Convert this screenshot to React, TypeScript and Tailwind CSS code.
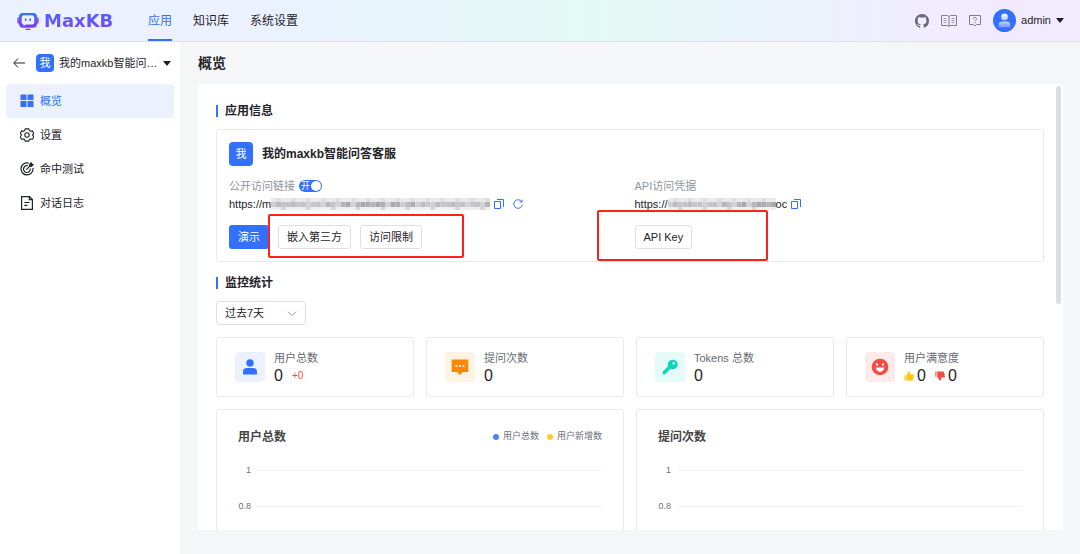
import React from "react";

function LogoMark() {
  return (
    <svg viewBox="0 0 24 20" className="h-[18px] w-[22px]" aria-hidden="true">
      <defs>
        <linearGradient id="logo" x1="0" y1="0" x2="0" y2="1">
          <stop offset="0" stopColor="#3370ff" />
          <stop offset="1" stopColor="#7f3bf5" />
        </linearGradient>
      </defs>
      <rect x="0" y="6" width="4" height="7" rx="1.5" fill="#8a5cf6" />
      <rect x="20" y="6" width="4" height="7" rx="1.5" fill="#8a5cf6" />
      <rect x="2" y="1" width="20" height="16.500" rx="4.5" fill="url(#logo)" />
      <path d="M7.500 3.700h9A2.500 2.500 0 0 1 19 6.200v5.300A2.500 2.500 0 0 1 16.500 14H10l-3 1.500V14A2.500 2.500 0 0 1 5 11.500V6.200A2.500 2.500 0 0 1 7.500 3.700z" fill="#ecf0fe" />
      <rect x="8.500" y="7" width="1.800" height="3" rx=".9" fill="#4a5cfb" />
      <rect x="13.500" y="7" width="1.800" height="3" rx=".9" fill="#4a5cfb" />
      <rect x="9" y="18.500" width="6" height="1.500" rx=".7" fill="#8b3cf5" />
    </svg>
  );
}

function GithubIcon() {
  return (
    <svg viewBox="0 0 16 16" className="size-[14px]" fill="#646a73" aria-hidden="true">
      <path d="M8 0C3.580 0 0 3.580 0 8c0 3.540 2.290 6.530 5.470 7.590.4.070.55-.17.55-.38 0-.19-.01-.82-.01-1.490-2.010.37-2.530-.49-2.690-.94-.09-.23-.48-.94-.82-1.130-.28-.15-.68-.52-.01-.53.63-.01 1.080.58 1.230.82.72 1.210 1.870.87 2.330.66.07-.52.28-.87.51-1.070-1.780-.2-3.640-.89-3.640-3.950 0-.87.31-1.590.82-2.150-.08-.2-.36-1.020.08-2.120 0 0 .67-.21 2.200.82.64-.18 1.320-.27 2-.27s1.360.09 2 .27c1.530-1.040 2.200-.82 2.200-.82.44 1.100.16 1.920.08 2.120.51.56.82 1.270.82 2.150 0 3.070-1.870 3.750-3.650 3.950.29.25.54.73.54 1.480 0 1.070-.01 1.930-.01 2.200 0 .21.15.46.55.38A8.010 8.010 0 0 0 16 8c0-4.420-3.580-8-8-8z" />
    </svg>
  );
}

function BookIcon() {
  return (
    <svg viewBox="0 0 16 12" className="h-3 w-4" fill="none" stroke="#7b8089" aria-hidden="true">
      <path d="M8 1.500v9.500M.5.500h6L8 1.500 9.500.500h6v10h-6L8 11.500 6.500 10.500h-6z" />
      <path d="M2.500 3.500h3M2.500 5.500h3M2.500 7.500h3M10.500 3.500h3M10.500 5.500h3M10.500 7.500h3" opacity=".7" />
    </svg>
  );
}

function HelpIcon() {
  return (
    <svg viewBox="0 0 12 12" className="size-3" fill="none" stroke="#7b8089" aria-hidden="true">
      <path d="M.5.500h11v9H7.500L6 11 4.500 9.500h-4z" />
      <path d="M4.500 4a1.500 1.500 0 1 1 2.300 1.200c-.6.300-.8.600-.8 1.100M6 7.300v1" />
    </svg>
  );
}

function Avatar() {
  return (
    <svg viewBox="0 0 24 24" className="size-[23px]" aria-hidden="true">
      <defs>
        <linearGradient id="person" x1="0" y1="0" x2="0" y2="1">
          <stop offset="0" stopColor="#fff" />
          <stop offset="1" stopColor="#fff" stopOpacity=".6" />
        </linearGradient>
        <linearGradient id="body" x1="0" y1="0" x2="0" y2="1">
          <stop offset="0" stopColor="#fff" stopOpacity=".7" />
          <stop offset="1" stopColor="#fff" stopOpacity=".3" />
        </linearGradient>
      </defs>
      <circle cx="12" cy="12" r="12" fill="#3370ff" />
      <circle cx="12" cy="8.300" r="3.500" fill="url(#person)" />
      <path d="M6 19v-2.500a3.500 3.500 0 0 1 3.500-3.500h5a3.500 3.500 0 0 1 3.500 3.500V19z" fill="url(#body)" />
    </svg>
  );
}

function Caret() {
  return (
    <svg viewBox="0 0 8 5" className="h-[5px] w-2 shrink-0" fill="#1f2329" aria-hidden="true">
      <path d="M.8 0h6.400a.4.400 0 0 1 .3.700L4.400 4.600a.5.500 0 0 1-.8 0L.5.700A.4.400 0 0 1 .8 0z" />
    </svg>
  );
}

function GridIcon() {
  return (
    <svg viewBox="0 0 14 14" className="size-[14px]" fill="#3370ff" aria-hidden="true">
      <rect x=".5" y=".5" width="6" height="5.500" rx=".5" />
      <rect x="7.500" y=".5" width="6" height="5.500" rx=".5" />
      <rect x=".5" y="7" width="6" height="6" rx=".5" />
      <rect x="7.500" y="7" width="6" height="6" rx=".5" />
    </svg>
  );
}

function GearIcon() {
  return (
    <svg viewBox="0 0 14 14" className="size-[14px]" fill="none" stroke="#1f2329" strokeWidth="1.100" strokeLinejoin="round" aria-hidden="true">
      <path d="M5.200.900h3.600l.6 1.700 1.100.6 1.800-.3 1.300 2.200v1L12.400 7l1.200 1.400v.9l-1.300 2-1.800-.3-1.100.6-.6 1.500H5.200l-.6-1.500-1.100-.6-1.800.3-1.300-2v-.9L1.600 7 .4 5.600v-.7l1.300-2 1.800.3 1.100-.6z" />
      <circle cx="7" cy="7" r="2.200" />
    </svg>
  );
}

function TargetIcon() {
  return (
    <svg viewBox="0 0 14 14" className="size-[14px]" fill="none" stroke="#1f2329" strokeWidth="1.200" strokeLinecap="round" strokeLinejoin="round" aria-hidden="true">
      <path d="M8.300 1.100A6 6 0 1 0 13 6.300" />
      <path d="M7.300 3.700A3.400 3.400 0 1 0 10.300 6.900" />
      <path d="M6.600 7.400 9.800 4.200" />
      <path d="M9.800 4.200V2.300L11.400.8l.3 1.500 1.500.3-1.500 1.600z" fill="#1f2329" />
    </svg>
  );
}

function DocIcon() {
  return (
    <svg viewBox="0 0 14 14" className="size-[14px]" fill="none" stroke="#1f2329" strokeWidth="1.200" aria-hidden="true">
      <path d="M1.600.700h8l2.800 2.800v9.800H1.600zM9.300.700v3h3M4.300 6.500h5.200M4.300 9.300h3.200" />
    </svg>
  );
}

function CopyIcon() {
  return (
    <svg viewBox="0 0 10 10" className="size-[10px]" fill="none" stroke="#3370ff" aria-hidden="true">
      <path d="M.5 2.500h6v7h-6zM3 .500h6.500V8" />
    </svg>
  );
}

function RefreshIcon() {
  return (
    <svg viewBox="0 0 10 10" className="size-[10px]" fill="none" stroke="#3370ff" aria-hidden="true">
      <path d="M8.700 2.800A4.300 4.300 0 1 0 9.300 5.500M9 .500v2.500H6.500" />
    </svg>
  );
}

function UserIcon() {
  return (
    <svg viewBox="0 0 16 16" className="size-4" fill="#3370ff" aria-hidden="true">
      <circle cx="8" cy="4" r="3.700" />
      <path d="M1 15v-2a4 4 0 0 1 4-4h6a4 4 0 0 1 4 4v2a.6.600 0 0 1-.6.600H1.600A.6.600 0 0 1 1 15z" />
    </svg>
  );
}

function ChatIcon() {
  return (
    <svg viewBox="0 0 18 18" className="size-[18px]" aria-hidden="true">
      <path d="M1.300 1.500h15.400a.6.600 0 0 1 .6.600v11.300a.6.600 0 0 1-.6.600H12l-3 3-3-3H1.300a.6.600 0 0 1-.6-.6V2.100a.6.600 0 0 1 .6-.6z" fill="#ff8800" />
      <path d="M4.500 7h2v1.800h-2zM8 7h2v1.800H8zM11.500 7h2v1.800h-2z" fill="#fff" />
    </svg>
  );
}

function KeyIcon() {
  return (
    <svg viewBox="0 0 16 16" className="size-4" aria-hidden="true">
      <path d="M10.600.800a4.700 4.700 0 1 1-1.500 9l-1.500.8L3 15.200H.800v-2.600l5.400-5.400A4.700 4.700 0 0 1 10.600.800z" fill="#04d8bd" />
      <circle cx="11.800" cy="4.300" r="1.300" fill="#fff" />
    </svg>
  );
}

function SmileIcon() {
  return (
    <svg viewBox="0 0 18 18" className="size-[18px]" aria-hidden="true">
      <circle cx="9" cy="9" r="8.300" fill="#f54a45" />
      <path d="M5 5.500h2v2H5zM11 5.500h2v2h-2zM4.800 9.500h8.400a4.200 4.200 0 0 1-8.400 0z" fill="#fff" />
    </svg>
  );
}

function ThumbIcon({ down }: { down?: boolean }) {
  return (
    <svg viewBox="0 0 10 10" className="size-[10px]" fill={down ? "#f54a45" : "#ffc60a"} aria-hidden="true">
      <g transform={down ? "matrix(1 0 0 -1 0 10)" : undefined}>
        <path d="M0 4.200h1.700V9.500H0z" opacity=".65" />
        <path d="M2.300 4.200 4.700.6c.9-.3 1.700.4 1.500 1.300L5.800 3.600h3.400c.6 0 .9.500.8 1L9 8.800c-.1.400-.5.700-.9.700H2.300z" />
      </g>
    </svg>
  );
}

const shades = ["#cfcfd1", "#b6b6b9", "#c7c7ca", "#aeaeb2", "#d3d3d5", "#bcbcc0", "#a9a9ad", "#c3c3c6"];

function Mosaic({ count }: { count: number }) {
  return (
    <svg viewBox={`0 0 ${count * 5} 12`} className="h-3 w-full" preserveAspectRatio="none" aria-hidden="true">
      {Array.from({ length: count }, (_, i) => (
        <g key={i}>
          <rect x={i * 5} y="0" width="5" height="4" fill={i % 3 === 1 ? "#dedee0" : "#e9e9eb"} />
          <rect x={i * 5} y="4" width="5" height="5" fill={shades[(i * 5 + (i >> 2)) % 8]} />
          <rect x={i * 5} y="9" width="5" height="3" fill={i % 5 === 2 ? "#d6d6d9" : "#efeff0"} />
        </g>
      ))}
    </svg>
  );
}

function SectionTitle({ children }: { children: React.ReactNode }) {
  return (
    <h2 className="flex h-5 items-center gap-[7px] text-[12px] font-bold">
      <span className="h-3 w-[2px] bg-[#3370ff]" />
      {children}
    </h2>
  );
}

const outlineButton = "h-6 rounded-[3px] border border-[#dee0e3] bg-white px-2 text-[11px] leading-4";

const menu = [
  { label: "概览", icon: <GridIcon />, active: true },
  { label: "设置", icon: <GearIcon /> },
  { label: "命中测试", icon: <TargetIcon /> },
  { label: "对话日志", icon: <DocIcon /> },
];

function Stat({ label, tint, icon, children }: { label: string; tint: string; icon: React.ReactNode; children: React.ReactNode }) {
  return (
    <div className="flex h-[60px] min-w-0 items-center gap-[9px] rounded-[3px] border border-[#e8e9eb] px-[18px]">
      <div className={`flex size-[30px] shrink-0 items-center justify-center rounded ${tint}`}>{icon}</div>
      <div>
        <p className="text-[11px] leading-[18px] text-[#646a73]">{label}</p>
        <div className="flex items-center text-[16px] leading-[18px]">{children}</div>
      </div>
    </div>
  );
}

function Chart({ title, legend }: { title: string; legend?: { name: string; dot: string }[] }) {
  return (
    <section className="h-[220px] min-w-0 rounded-[3px] border border-[#e8e9eb] px-[21px] pt-[17px]">
      <div className="flex h-5 items-center justify-between">
        <h3 className="text-[12px] font-bold text-[#464646]">{title}</h3>
        <ul className="flex gap-2 text-[9px] text-[#6b6f78]">
          {legend?.map((l) => (
            <li key={l.name} className="flex items-center gap-1">
              <span className={`size-[6px] rounded-full ${l.dot}`} />
              {l.name}
            </li>
          ))}
        </ul>
      </div>
      <div className="mt-[15px] text-[9px] leading-4 text-[#6e7079]">
        {["1", "0.8"].map((v) => (
          <div key={v} className="mb-5 flex h-4 items-center gap-[6px]">
            <span className="w-[13px] text-right">{v}</span>
            <span className="h-px flex-1 bg-[#f1f2f4]" />
          </div>
        ))}
      </div>
    </section>
  );
}

export default function App() {
  return (
    <div className="flex h-screen flex-col bg-[#f5f6f7] font-['Liberation_Sans','Noto_Sans_CJK_SC',sans-serif] text-[11px] text-[#1f2329]">
      <header className="flex h-[42px] shrink-0 items-center border-b border-[#dcdfe9] bg-[linear-gradient(90deg,#ebf1ff_24%,#e2faf5_55%,#f2ebfe_88%)] pr-4 pl-[17px]">
        <a href="#home" className="flex w-[131px] items-center gap-[5px]">
          <LogoMark />
          <span className="bg-linear-to-b from-[#3f66fd] to-[#7b41f6] bg-clip-text font-['DejaVu_Sans',sans-serif] text-[18px] leading-6 font-bold text-transparent">MaxKB</span>
        </a>
        <nav className="flex h-full gap-[21px] text-[12px]">
          <a href="#apps" className="flex items-center border-b-2 border-[#3370ff] pt-[2px] text-[#3370ff]">应用</a>
          <a href="#datasets" className="flex items-center">知识库</a>
          <a href="#system" className="flex items-center">系统设置</a>
        </nav>
        <div className="ml-auto flex items-center gap-3">
          <a href="#github" aria-label="GitHub"><GithubIcon /></a>
          <a href="#docs" aria-label="文档"><BookIcon /></a>
          <a href="#help" aria-label="帮助"><HelpIcon /></a>
          <button className="flex items-center gap-[5px]">
            <Avatar />
            admin
            <Caret />
          </button>
        </div>
      </header>

      <div className="flex min-h-0 flex-1">
        <aside className="w-[180px] shrink-0 bg-white px-[6px]">
          <div className="flex h-[42px] items-center pr-[3px] pl-[7px]">
            <button aria-label="返回">
              <svg viewBox="0 0 12 10" className="h-[10px] w-3" fill="none" stroke="#1f2329" aria-hidden="true">
                <path d="M5 .500.800 5 5 9.500M.8 5H12" />
              </svg>
            </button>
            <span className="ml-[11px] flex size-[18px] shrink-0 items-center justify-center rounded bg-[#3370ff] text-white">我</span>
            <button className="ml-[5px] flex flex-1 items-center justify-between gap-1 whitespace-nowrap">
              <span>我的maxkb智能问…</span>
              <Caret />
            </button>
          </div>
          <nav>
            {menu.map((m) => (
              <a key={m.label} href={`#${m.label}`} className={`flex h-[34px] items-center gap-[6px] rounded pl-[14px] ${m.active ? "bg-[#ebf1ff] text-[#3370ff]" : ""}`}>
                {m.icon}
                {m.label}
              </a>
            ))}
          </nav>
        </aside>

        <main className="flex min-w-0 flex-1 flex-col pr-[17px] pb-6 pl-[18px]">
          <h1 className="flex h-[42px] shrink-0 items-center text-[14px] font-bold">概览</h1>
          <div className="relative min-h-0 flex-1 overflow-hidden rounded-[3px] bg-white pt-[17px] pr-[19px] pl-[18px]">
            <SectionTitle>应用信息</SectionTitle>
            <section className="mt-2 h-[133px] rounded-[3px] border border-[#e8e9eb] px-3 pt-3">
              <div className="flex items-center gap-[9px]">
                <span className="flex size-6 items-center justify-center rounded bg-[#3370ff] text-white">我</span>
                <h3 className="text-[12px] font-bold">我的maxkb智能问答客服</h3>
              </div>
              <div className="mt-[11px] grid grid-cols-2 gap-[9px]">
                <div>
                  <div className="flex h-[18px] items-center gap-1 text-[#8f959e]">
                    公开访问链接
                    <button role="switch" aria-checked="true" aria-label="公开访问链接" className="flex h-3 w-[23px] items-center justify-between rounded-full bg-[#3370ff] pr-px pl-[2px] text-[9px] leading-3 text-white">
                      开<span className="size-[10px] rounded-full bg-white" />
                    </button>
                  </div>
                  <div className="flex h-[18px] items-center">
                    <span>https://m</span>
                    <span className="w-[219px]"><Mosaic count={44} /></span>
                    <button aria-label="复制" className="ml-1"><CopyIcon /></button>
                    <button aria-label="刷新" className="ml-[9px]"><RefreshIcon /></button>
                  </div>
                  <div className="relative mt-3 flex gap-[9px]">
                    <button className="h-6 rounded-[3px] bg-[#3370ff] px-[9px] text-white">演示</button>
                    <button className={outlineButton}>嵌入第三方</button>
                    <button className={outlineButton}>访问限制</button>
                    <span className="pointer-events-none absolute -top-[11px] left-[39px] h-11 w-[196px] rounded-[2px] border-2 border-[#fb2318]" />
                  </div>
                </div>
                <div>
                  <div className="flex h-[18px] items-center text-[#8f959e]">API访问凭据</div>
                  <div className="flex h-[18px] items-center">
                    <span>https://</span>
                    <span className="w-[108px]"><Mosaic count={22} /></span>
                    <span>oc</span>
                    <button aria-label="复制" className="ml-1"><CopyIcon /></button>
                  </div>
                  <div className="relative mt-3 flex">
                    <button className={outlineButton}>API Key</button>
                    <span className="pointer-events-none absolute -top-[15px] -left-[38px] h-[51px] w-[171px] rounded-[2px] border-2 border-[#fb2318]" />
                  </div>
                </div>
              </div>
            </section>

            <div className="mt-[11px]"><SectionTitle>监控统计</SectionTitle></div>
            <div className="relative mt-2 w-[90px]">
              <select aria-label="时间范围" className="h-6 w-full appearance-none rounded-[3px] border border-[#dee0e3] bg-white pl-2 text-[11px]">
                <option>过去7天</option>
                <option>过去30天</option>
              </select>
              <svg viewBox="0 0 10 6" className="pointer-events-none absolute top-[10px] right-[9px] h-[6px] w-[10px]" fill="none" stroke="#8f959e" aria-hidden="true">
                <path d="m1 .700 4 4 4-4" />
              </svg>
            </div>

            <div className="mt-3 grid grid-cols-4 gap-3">
              <Stat label="用户总数" tint="bg-[#ebf1ff]" icon={<UserIcon />}>
                0<span className="ml-[9px] text-[10px] text-[#f54a45]">+0</span>
              </Stat>
              <Stat label="提问次数" tint="bg-[#fff3e5]" icon={<ChatIcon />}>0</Stat>
              <Stat label="Tokens 总数" tint="bg-[#e5fbf8]" icon={<KeyIcon />}>0</Stat>
              <Stat label="用户满意度" tint="bg-[#ffebeb]" icon={<SmileIcon />}>
                <ThumbIcon /><span className="mr-[9px] ml-[3px]">0</span>
                <ThumbIcon down /><span className="ml-[3px]">0</span>
              </Stat>
            </div>

            <div className="mt-3 grid grid-cols-2 gap-3">
              <Chart title="用户总数" legend={[{ name: "用户总数", dot: "bg-[#4c82ff]" }, { name: "用户新增数", dot: "bg-[#ffcb2e]" }]} />
              <Chart title="提问次数" />
            </div>
            <div className="absolute top-[2px] right-[2px] h-[218px] w-[5px] rounded-full bg-[#dddee1]" />
          </div>
        </main>
      </div>
    </div>
  );
}
